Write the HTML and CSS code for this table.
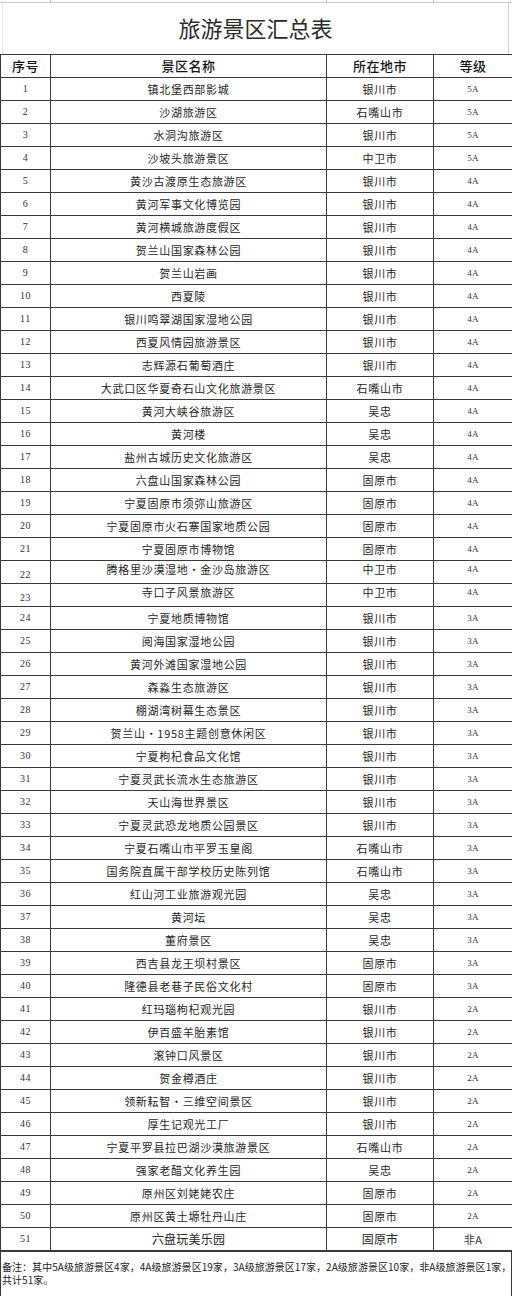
FILE: index.html
```html
<!DOCTYPE html>
<html lang="zh-CN">
<head>
<meta charset="utf-8">
<title>旅游景区汇总表</title>
<link rel="stylesheet" href="styles.css">
</head>
<body>
<div class="sheet">
  <div class="topstrip">
    <span class="ts c1"></span><span class="ts c2"></span><span class="ts c3"></span><span class="ts c4"></span>
  </div>
  <div class="title">旅游景区汇总表</div>
  <table class="list">
    <colgroup>
      <col class="w1"><col class="w2"><col class="w3"><col class="w4">
    </colgroup>
    <thead>
      <tr><th>序号</th><th>景区名称</th><th>所在地市</th><th>等级</th></tr>
    </thead>
    <tbody>
      <tr><td class="no">1</td><td class="nm">镇北堡西部影城</td><td class="ct">银川市</td><td class="gr">5A</td></tr>
      <tr><td class="no">2</td><td class="nm">沙湖旅游区</td><td class="ct">石嘴山市</td><td class="gr">5A</td></tr>
      <tr><td class="no">3</td><td class="nm">水洞沟旅游区</td><td class="ct">银川市</td><td class="gr">5A</td></tr>
      <tr><td class="no">4</td><td class="nm">沙坡头旅游景区</td><td class="ct">中卫市</td><td class="gr">5A</td></tr>
      <tr><td class="no">5</td><td class="nm">黄沙古渡原生态旅游区</td><td class="ct">银川市</td><td class="gr">4A</td></tr>
      <tr><td class="no">6</td><td class="nm">黄河军事文化博览园</td><td class="ct">银川市</td><td class="gr">4A</td></tr>
      <tr><td class="no">7</td><td class="nm">黄河横城旅游度假区</td><td class="ct">银川市</td><td class="gr">4A</td></tr>
      <tr><td class="no">8</td><td class="nm">贺兰山国家森林公园</td><td class="ct">银川市</td><td class="gr">4A</td></tr>
      <tr><td class="no">9</td><td class="nm">贺兰山岩画</td><td class="ct">银川市</td><td class="gr">4A</td></tr>
      <tr><td class="no">10</td><td class="nm">西夏陵</td><td class="ct">银川市</td><td class="gr">4A</td></tr>
      <tr><td class="no">11</td><td class="nm">银川鸣翠湖国家湿地公园</td><td class="ct">银川市</td><td class="gr">4A</td></tr>
      <tr><td class="no">12</td><td class="nm">西夏风情园旅游景区</td><td class="ct">银川市</td><td class="gr">4A</td></tr>
      <tr><td class="no">13</td><td class="nm">志辉源石葡萄酒庄</td><td class="ct">银川市</td><td class="gr">4A</td></tr>
      <tr><td class="no">14</td><td class="nm">大武口区华夏奇石山文化旅游景区</td><td class="ct">石嘴山市</td><td class="gr">4A</td></tr>
      <tr><td class="no">15</td><td class="nm">黄河大峡谷旅游区</td><td class="ct">吴忠</td><td class="gr">4A</td></tr>
      <tr><td class="no">16</td><td class="nm">黄河楼</td><td class="ct">吴忠</td><td class="gr">4A</td></tr>
      <tr><td class="no">17</td><td class="nm">盐州古城历史文化旅游区</td><td class="ct">吴忠</td><td class="gr">4A</td></tr>
      <tr><td class="no">18</td><td class="nm">六盘山国家森林公园</td><td class="ct">固原市</td><td class="gr">4A</td></tr>
      <tr><td class="no">19</td><td class="nm">宁夏固原市须弥山旅游区</td><td class="ct">固原市</td><td class="gr">4A</td></tr>
      <tr><td class="no">20</td><td class="nm">宁夏固原市火石寨国家地质公园</td><td class="ct">固原市</td><td class="gr">4A</td></tr>
      <tr><td class="no">21</td><td class="nm">宁夏固原市博物馆</td><td class="ct">固原市</td><td class="gr">4A</td></tr>
      <tr><td class="no low">22</td><td class="nm high">腾格里沙漠湿地·金沙岛旅游区</td><td class="ct high">中卫市</td><td class="gr high">4A</td></tr>
      <tr><td class="no low">23</td><td class="nm high">寺口子风景旅游区</td><td class="ct high">中卫市</td><td class="gr high">4A</td></tr>
      <tr><td class="no">24</td><td class="nm">宁夏地质博物馆</td><td class="ct">银川市</td><td class="gr">3A</td></tr>
      <tr><td class="no">25</td><td class="nm">阅海国家湿地公园</td><td class="ct">银川市</td><td class="gr">3A</td></tr>
      <tr><td class="no">26</td><td class="nm">黄河外滩国家湿地公园</td><td class="ct">银川市</td><td class="gr">3A</td></tr>
      <tr><td class="no">27</td><td class="nm">森淼生态旅游区</td><td class="ct">银川市</td><td class="gr">3A</td></tr>
      <tr><td class="no">28</td><td class="nm">棚湖湾树幕生态景区</td><td class="ct">银川市</td><td class="gr">3A</td></tr>
      <tr><td class="no">29</td><td class="nm">贺兰山·1958主题创意休闲区</td><td class="ct">银川市</td><td class="gr">3A</td></tr>
      <tr><td class="no">30</td><td class="nm">宁夏枸杞食品文化馆</td><td class="ct">银川市</td><td class="gr">3A</td></tr>
      <tr><td class="no">31</td><td class="nm">宁夏灵武长流水生态旅游区</td><td class="ct">银川市</td><td class="gr">3A</td></tr>
      <tr><td class="no">32</td><td class="nm">天山海世界景区</td><td class="ct">银川市</td><td class="gr">3A</td></tr>
      <tr><td class="no">33</td><td class="nm">宁夏灵武恐龙地质公园景区</td><td class="ct">银川市</td><td class="gr">3A</td></tr>
      <tr><td class="no">34</td><td class="nm">宁夏石嘴山市平罗玉皇阁</td><td class="ct">石嘴山市</td><td class="gr">3A</td></tr>
      <tr><td class="no">35</td><td class="nm">国务院直属干部学校历史陈列馆</td><td class="ct">石嘴山市</td><td class="gr">3A</td></tr>
      <tr><td class="no">36</td><td class="nm">红山河工业旅游观光园</td><td class="ct">吴忠</td><td class="gr">3A</td></tr>
      <tr><td class="no">37</td><td class="nm">黄河坛</td><td class="ct">吴忠</td><td class="gr">3A</td></tr>
      <tr><td class="no">38</td><td class="nm">董府景区</td><td class="ct">吴忠</td><td class="gr">3A</td></tr>
      <tr><td class="no">39</td><td class="nm">西吉县龙王坝村景区</td><td class="ct">固原市</td><td class="gr">3A</td></tr>
      <tr><td class="no">40</td><td class="nm">隆德县老巷子民俗文化村</td><td class="ct">固原市</td><td class="gr">3A</td></tr>
      <tr><td class="no">41</td><td class="nm">红玛瑙枸杞观光园</td><td class="ct">银川市</td><td class="gr">2A</td></tr>
      <tr><td class="no">42</td><td class="nm">伊百盛羊胎素馆</td><td class="ct">银川市</td><td class="gr">2A</td></tr>
      <tr><td class="no">43</td><td class="nm">滚钟口风景区</td><td class="ct">银川市</td><td class="gr">2A</td></tr>
      <tr><td class="no">44</td><td class="nm">贺金樽酒庄</td><td class="ct">银川市</td><td class="gr">2A</td></tr>
      <tr><td class="no">45</td><td class="nm">领新耘智·三维空间景区</td><td class="ct">银川市</td><td class="gr">2A</td></tr>
      <tr><td class="no">46</td><td class="nm">厚生记观光工厂</td><td class="ct">银川市</td><td class="gr">2A</td></tr>
      <tr><td class="no">47</td><td class="nm">宁夏平罗县拉巴湖沙漠旅游景区</td><td class="ct">石嘴山市</td><td class="gr">2A</td></tr>
      <tr><td class="no">48</td><td class="nm">强家老醋文化养生园</td><td class="ct">吴忠</td><td class="gr">2A</td></tr>
      <tr><td class="no">49</td><td class="nm">原州区刘姥姥农庄</td><td class="ct">固原市</td><td class="gr">2A</td></tr>
      <tr><td class="no">50</td><td class="nm">原州区黄土塬牡丹山庄</td><td class="ct">固原市</td><td class="gr">2A</td></tr>
      <tr class="last"><td class="no">51</td><td class="nm plain">六盘玩美乐园</td><td class="ct plain">固原市</td><td class="gr plain">非A</td></tr>
    </tbody>
  </table>
  <div class="note"><span class="line">备注：其中5A级旅游景区4家，4A级旅游景区19家，3A级旅游景区17家，2A级旅游景区10家，非A级旅游景区1家，</span><span class="line">共计51家。</span></div>
</div>
</body>
</html>
```

FILE: styles.css
```css
html, body {
  margin: 0;
  padding: 0;
  background: #ffffff;
}

.sheet {
  width: 512px;
  font-family: "Noto Sans CJK SC", "Noto Sans", sans-serif;
  color: #222222;
}

.topstrip {
  display: flex;
  height: 2px;
  border-bottom: 1px solid #c9ced6;
}

.ts {
  display: block;
  height: 2px;
  border-right: 1px solid #b8bec8;
}
.ts.c1 { width: 50px; }
.ts.c2 { width: 275px; }
.ts.c3 { width: 106px; }
.ts.c4 { width: 76px; border-right-color: #d8dce2; }

.title {
  height: 51px;
  margin: 0 3px 0 2px;
  border-left: 1px solid #e3e6ea;
  border-right: 1px solid #cfd3d9;
  display: flex;
  align-items: center;
  justify-content: center;
  font-size: 22px;
  letter-spacing: 0;
  color: #2b2b2b;
  font-weight: 400;
  padding-bottom: 3px;
  box-sizing: border-box;
}

.list {
  width: 512px;
  table-layout: fixed;
  border-collapse: collapse;
}

.w1 { width: 50px; }
.w2 { width: 276px; }
.w3 { width: 107px; }
.w4 { width: 79px; }

.list th,
.list td {
  border: 1px solid #3a3a3a;
  height: 22px;
  padding: 0;
  text-align: center;
  vertical-align: middle;
  line-height: 14px;
  overflow: hidden;
  white-space: nowrap;
}

.list th {
  font-size: 13px;
  font-weight: 500;
  color: #151515;
  letter-spacing: 0.5px;
}

.list td.nm,
.list td.ct {
  font-size: 11px;
  letter-spacing: 0.7px;
  color: #262626;
}

.list td.plain {
  letter-spacing: 0.2px;
  font-size: 12px;
}

.list td.no {
  font-family: "Liberation Serif", "DejaVu Serif", serif;
  font-size: 10px;
  color: #333333;
  letter-spacing: 0.6px;
}

.list td.gr {
  font-family: "Liberation Serif", "DejaVu Serif", serif;
  font-size: 9px;
  color: #333333;
  letter-spacing: 0.3px;
}

.list td.gr.plain {
  font-family: "Noto Sans CJK SC", sans-serif;
  font-size: 11px;
}

.list td.low {
  padding-top: 6px;
  height: 16px;
}

.list td.high {
  padding-bottom: 6px;
  height: 16px;
}

.list tr.last td {
  border-bottom: 2px solid #3a3a3a;
}

.note {
  border: 1px solid #3a3a3a;
  border-top: 0;
  height: 45px;
  box-sizing: border-box;
  padding: 8px 0 0 1px;
  font-size: 10px;
  line-height: 13px;
  color: #222222;
  overflow: hidden;
}

.note .line {
  display: block;
  white-space: nowrap;
  letter-spacing: 0.04px;
}
```
